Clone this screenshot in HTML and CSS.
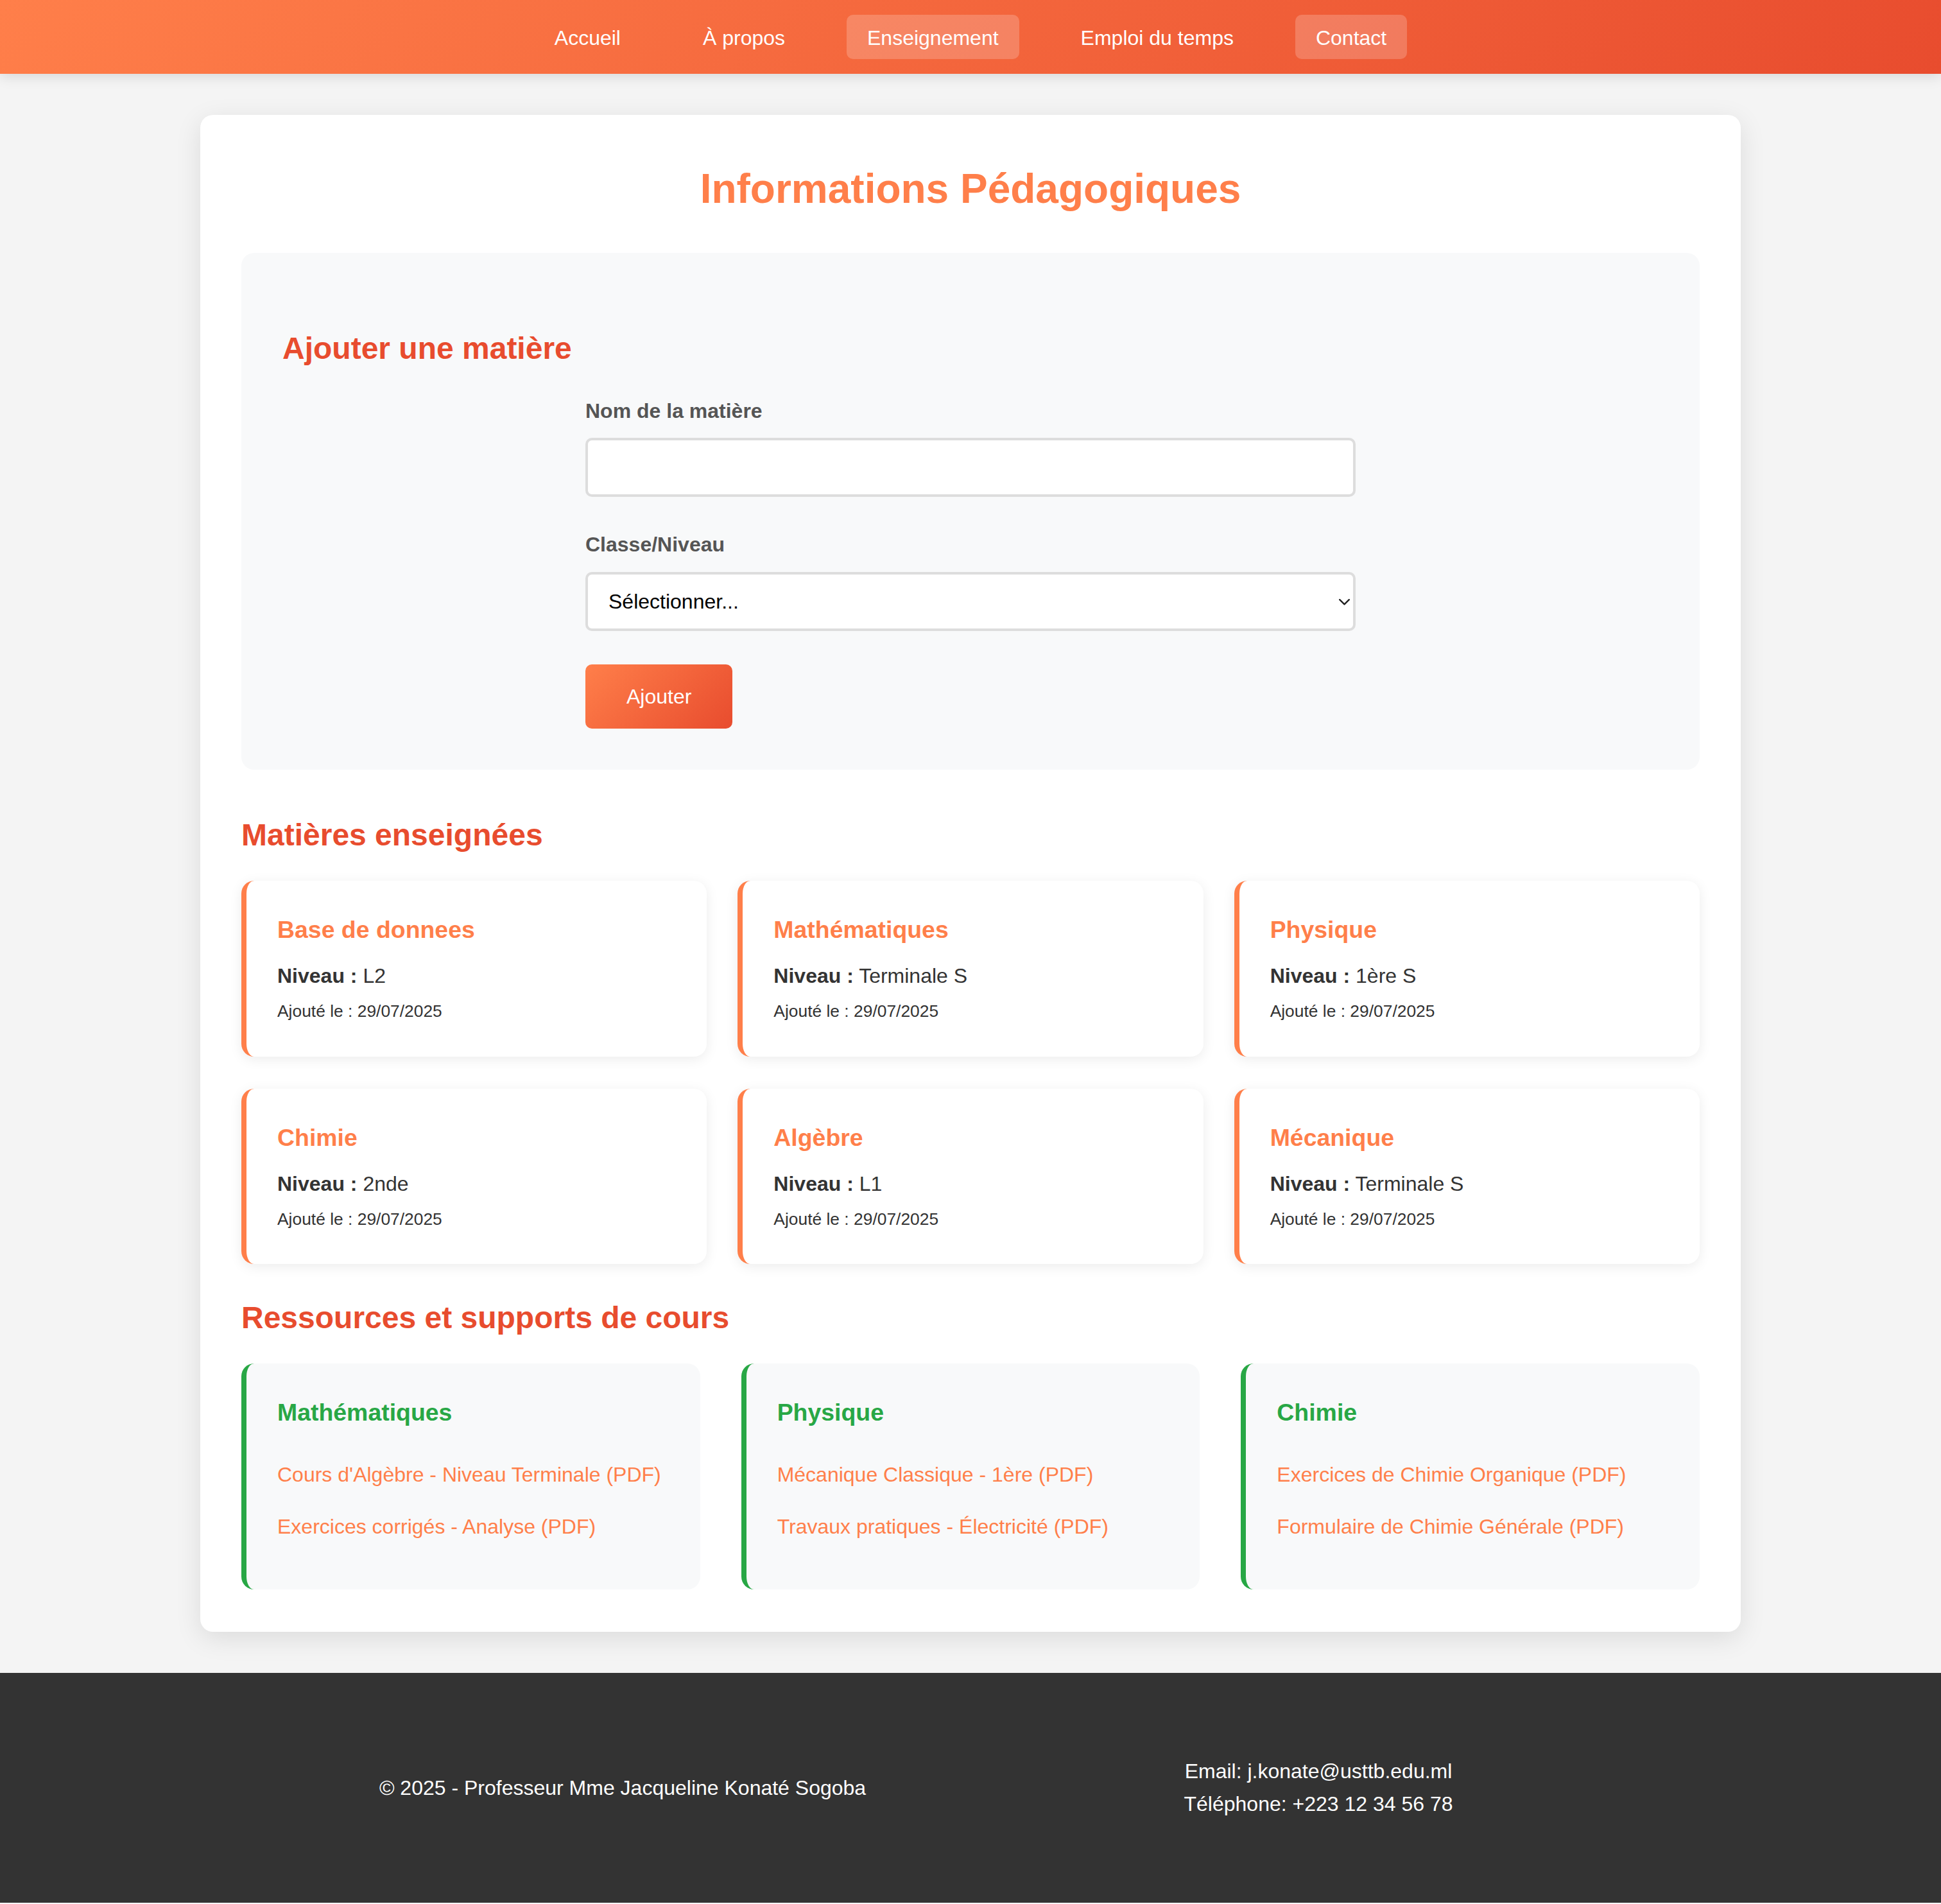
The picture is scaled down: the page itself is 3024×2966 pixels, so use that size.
FILE: index.html
```html
<!DOCTYPE html>
<html lang="fr">
<head>
<meta charset="utf-8">
<title>Informations Pédagogiques</title>
<link rel="stylesheet" href="styles.css">
</head>
<body>
<nav class="topnav">
  <ul>
    <li><a href="#">Accueil</a></li>
    <li><a href="#">À propos</a></li>
    <li><a href="#" class="active">Enseignement</a></li>
    <li><a href="#">Emploi du temps</a></li>
    <li><a href="#" class="active">Contact</a></li>
  </ul>
</nav>

<main class="page">
  <h1 class="page-title">Informations Pédagogiques</h1>

  <section class="add-section">
    <h2 class="section-title add-title">Ajouter une matière</h2>
    <form class="form">
      <div class="field">
        <label for="nom">Nom de la matière</label>
        <input id="nom" class="text-input" type="text">
      </div>
      <div class="field field-select">
        <label for="classe">Classe/Niveau</label>
        <div class="select-wrap">
          <select id="classe" class="select">
            <option>Sélectionner...</option>
          </select>
          <svg class="chevron" viewBox="0 0 17 10"><polyline points="1.2,1.2 8.5,8.4 15.8,1.2" fill="none" stroke="#222" stroke-width="2.4" stroke-linecap="round" stroke-linejoin="round"/></svg>
        </div>
      </div>
      <button type="button" class="btn">Ajouter</button>
    </form>
  </section>

  <h2 class="section-title subjects-title">Matières enseignées</h2>
  <div class="subject-grid">
    <div class="subject-card">
      <h3>Base de donnees</h3>
      <p class="level"><strong>Niveau :</strong> L2</p>
      <p class="date">Ajouté le : 29/07/2025</p>
    </div>
    <div class="subject-card">
      <h3>Mathématiques</h3>
      <p class="level"><strong>Niveau :</strong> Terminale S</p>
      <p class="date">Ajouté le : 29/07/2025</p>
    </div>
    <div class="subject-card">
      <h3>Physique</h3>
      <p class="level"><strong>Niveau :</strong> 1ère S</p>
      <p class="date">Ajouté le : 29/07/2025</p>
    </div>
    <div class="subject-card">
      <h3>Chimie</h3>
      <p class="level"><strong>Niveau :</strong> 2nde</p>
      <p class="date">Ajouté le : 29/07/2025</p>
    </div>
    <div class="subject-card">
      <h3>Algèbre</h3>
      <p class="level"><strong>Niveau :</strong> L1</p>
      <p class="date">Ajouté le : 29/07/2025</p>
    </div>
    <div class="subject-card">
      <h3>Mécanique</h3>
      <p class="level"><strong>Niveau :</strong> Terminale S</p>
      <p class="date">Ajouté le : 29/07/2025</p>
    </div>
  </div>

  <h2 class="section-title resources-title">Ressources et supports de cours</h2>
  <div class="resource-grid">
    <div class="resource-card">
      <h3>Mathématiques</h3>
      <ul>
        <li><a href="#">Cours d'Algèbre - Niveau Terminale (PDF)</a></li>
        <li><a href="#">Exercices corrigés - Analyse (PDF)</a></li>
      </ul>
    </div>
    <div class="resource-card">
      <h3>Physique</h3>
      <ul>
        <li><a href="#">Mécanique Classique - 1ère (PDF)</a></li>
        <li><a href="#">Travaux pratiques - Électricité (PDF)</a></li>
      </ul>
    </div>
    <div class="resource-card">
      <h3>Chimie</h3>
      <ul>
        <li><a href="#">Exercices de Chimie Organique (PDF)</a></li>
        <li><a href="#">Formulaire de Chimie Générale (PDF)</a></li>
      </ul>
    </div>
  </div>
</main>

<footer class="footer">
  <div class="footer-inner">
    <div class="footer-col">
      <p>© 2025 - Professeur Mme Jacqueline Konaté Sogoba</p>
    </div>
    <div class="footer-col">
      <p>Email: j.konate@usttb.edu.ml</p>
      <p>Téléphone: +223 12 34 56 78</p>
    </div>
  </div>
</footer>
</body>
</html>
```

FILE: styles.css
```css
* {
  box-sizing: border-box;
}

body {
  margin: 0;
  background: #f4f4f4;
  font-family: "Liberation Sans", Arial, Helvetica, sans-serif;
  font-size: 32px;
  line-height: 1.6;
  color: #333;
}

/* Navigation */
.topnav {
  height: 115px;
  background: linear-gradient(135deg, #ff7f4a, #e84c2e);
  box-shadow: 0 4px 20px rgba(0, 0, 0, 0.12);
  display: flex;
  justify-content: center;
  align-items: center;
  position: relative;
  z-index: 1;
}

.topnav ul {
  list-style: none;
  margin: 0;
  padding: 0;
  display: flex;
  gap: 64px;
}

.topnav a {
  display: block;
  padding: 18px 32px 14px;
  line-height: 37px;
  color: #fff;
  text-decoration: none;
  border-radius: 10px;
}

.topnav a.active {
  background: rgba(255, 255, 255, 0.2);
}

/* Main card */
.page {
  width: 2400px;
  margin: 64px auto;
  background: #fff;
  border-radius: 20px;
  box-shadow: 0 10px 40px rgba(0, 0, 0, 0.1);
  padding: 64px 64px 66px;
}

.page-title {
  margin: 0 0 49px;
  text-align: center;
  font-size: 64px;
  color: #ff7f4a;
}

.section-title {
  font-size: 48px;
  color: #e84c2e;
}

/* Add form */
.add-section {
  background: #f8f9fa;
  border-radius: 20px;
  padding: 64px;
}

.add-title {
  margin: 47px 0 33px;
}

.form {
  width: 1200px;
  margin: 0 auto;
}

.field {
  margin-bottom: 49px;
}

.field-select {
  margin-bottom: 52px;
}

.field label {
  display: block;
  font-weight: bold;
  color: #555;
  margin-bottom: 16px;
}

.text-input,
.select {
  display: block;
  width: 100%;
  height: 92px;
  border: 4px solid #ddd;
  border-radius: 10px;
  background: #fff;
  font-family: inherit;
  font-size: 32px;
  margin: 0;
}

.text-input {
  padding: 0 26px;
}

.select {
  appearance: none;
  -webkit-appearance: none;
  padding: 0 30px 0 32px;
  color: #000;
}

.select-wrap {
  position: relative;
}

.chevron {
  position: absolute;
  right: 9px;
  top: 42px;
  width: 17px;
  height: 10px;
  pointer-events: none;
}

.btn {
  display: block;
  height: 100px;
  padding: 0 64px;
  border: none;
  border-radius: 10px;
  background: linear-gradient(135deg, #ff7f4a, #e84c2e);
  color: #fff;
  font-family: inherit;
  font-size: 32px;
  line-height: 100px;
}

/* Subjects */
.subjects-title {
  margin: 64px 0 33px;
}

.subject-grid {
  display: grid;
  grid-template-columns: repeat(3, 1fr);
  column-gap: 48px;
  row-gap: 50px;
}

.subject-card {
  background: #fff;
  border-left: 8px solid #ff7f4a;
  border-radius: 20px;
  box-shadow: 0 4px 20px rgba(0, 0, 0, 0.08);
  padding: 47px 48px 49px 48px;
}

.subject-card h3 {
  margin: 0 0 16px;
  font-size: 37.44px;
  color: #ff7f4a;
}

.level {
  margin: 0 0 8px;
}

.date {
  margin: 0;
  font-size: 26.4px;
  color: #333;
}

/* Resources */
.resources-title {
  margin: 46px 0 32px;
}

.resource-grid {
  display: grid;
  grid-template-columns: repeat(3, 1fr);
  gap: 64px;
}

.resource-card {
  background: #f8f9fa;
  border-left: 8px solid #28a745;
  border-radius: 20px;
  padding: 47px 48px 57px 48px;
}

.resource-card h3 {
  margin: 0 0 26px;
  font-size: 37.44px;
  color: #28a745;
}

.resource-card ul {
  list-style: none;
  margin: 0;
  padding: 0;
}

.resource-card li {
  padding: 15px 0;
}

.resource-card a {
  color: #ff7f4a;
  text-decoration: none;
}

/* Footer */
.footer {
  background: #333;
  color: #fff;
  padding: 128px 0;
}

.footer-inner {
  width: 2168px;
  margin: 0 auto;
  display: flex;
  align-items: center;
}

.footer-col {
  flex: 1;
  text-align: center;
}

.footer-col p {
  margin: 0;
}
```
